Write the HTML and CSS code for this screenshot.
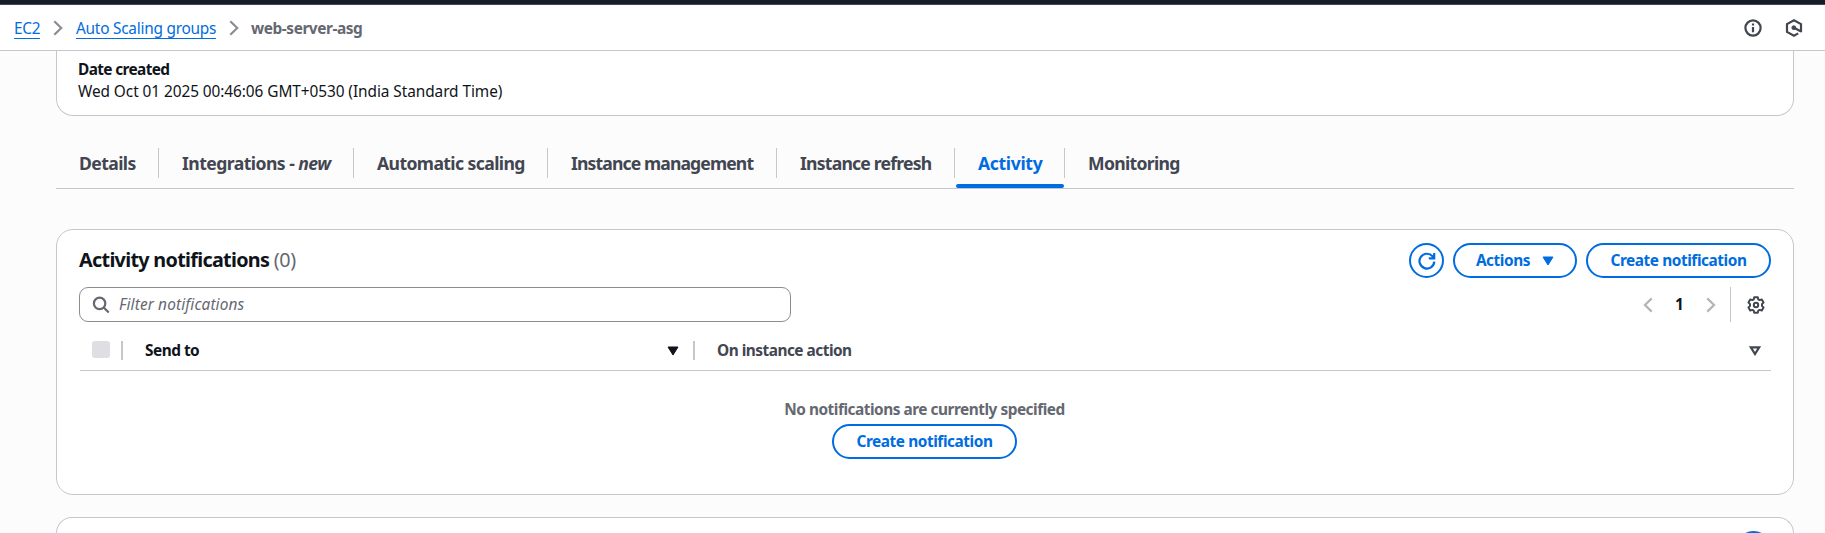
FILE: index.html
```html
<!DOCTYPE html>
<html lang="en">
<head>
<meta charset="utf-8">
<title>web-server-asg | Auto Scaling groups</title>
<link rel="stylesheet" href="styles.css">
</head>
<body>
<div class="topbar"></div>
<header class="header">
  <nav class="crumbs">
    <a class="crumb crumb-ec2">EC2</a>
    <svg class="crumb-sep" width="10" height="16" viewBox="0 0 10 16"><path d="M1.3 1.2 8.2 8l-6.9 6.8"/></svg>
    <a class="crumb crumb-asg">Auto Scaling groups</a>
    <svg class="crumb-sep" width="10" height="16" viewBox="0 0 10 16"><path d="M1.3 1.2 8.2 8l-6.9 6.8"/></svg>
    <span class="crumb-current">web-server-asg</span>
  </nav>
  <div class="tools">
    <svg width="18" height="18" viewBox="0 0 18 18"><circle cx="9" cy="9" r="7.6"/><path d="M9 8v5.2M9 4.6v2"/></svg>
    <svg width="18" height="18" viewBox="0 0 18 18"><path d="M16 13.2V5.1L9 1.3 2 5.1v7.8l7 3.800 4.200-2.300M9 8.800l7 3.600"/><circle class="solid" cx="8.800" cy="8.700" r="1.900"/></svg>
  </div>
</header>
<main class="main">
  <section class="summary">
    <div class="label">Date created</div>
    <div class="value">Wed Oct 01 2025 00:46:06 GMT+0530 (India Standard Time)</div>
  </section>
  <nav class="tabs">
    <a class="tab t1"><span>Details</span></a>
    <a class="tab t2"><span>Integrations - <i>new</i></span></a>
    <a class="tab t3"><span>Automatic scaling</span></a>
    <a class="tab t4"><span>Instance management</span></a>
    <a class="tab t5"><span>Instance refresh</span></a>
    <a class="tab t6 active"><span>Activity</span></a>
    <a class="tab t7"><span>Monitoring</span></a>
  </nav>
  <section class="panel">
    <div class="panel-head">
      <h2><span class="title">Activity notifications</span> <span class="count">(0)</span></h2>
      <div class="actions">
        <button class="btn round"><svg width="18" height="18" viewBox="0 0 18 18"><path d="M16.3 9.6A7.4 7.4 0 1 1 14.6 4.4L16 6M16.2 1v5.3h-5.4"/></svg></button>
        <button class="btn menu"><span>Actions</span><svg width="12" height="10" viewBox="0 0 12 10"><path class="solid" d="M1 1h10L6 9z"/></svg></button>
        <button class="btn create"><span>Create notification</span></button>
      </div>
    </div>
    <div class="filter-row">
      <div class="search">
        <svg width="18" height="18" viewBox="0 0 18 18"><circle cx="7.6" cy="7.4" r="5.7"/><path d="m11.7 11.5 5 5"/></svg>
        <span>Filter notifications</span>
      </div>
      <div class="pager">
        <svg width="10" height="16" viewBox="0 0 10 16"><path d="M8.7 1.4 2 8l6.7 6.6"/></svg>
        <b>1</b>
        <svg width="10" height="16" viewBox="0 0 10 16"><path d="M1.3 1.4 8 8l-6.7 6.6"/></svg>
        <div class="prefs">
          <svg class="gear" width="18" height="18" viewBox="0 0 18 18"><path d="M7.2 1.300h3.600l.5 2.100 1.300.7 2.200-.6 1.700 3-1.500 1.600v1.800l1.500 1.600-1.700 3-2.200-.6-1.300.7-.5 2.100H7.200l-.5-2.100-1.300-.7-2.200.6-1.700-3L3 9.900V8.100L1.500 6.500l1.700-3 2.200.6 1.300-.7z"/><circle cx="9" cy="9" r="2.200"/></svg>
        </div>
      </div>
    </div>
    <div class="thead">
      <span class="check"></span>
      <span class="rule"></span>
      <div class="col col-send"><span>Send to</span><svg width="12" height="10" viewBox="0 0 12 10"><path class="solid" d="M1 1h10L6 9z"/></svg></div>
      <span class="rule"></span>
      <div class="col col-action"><span>On instance action</span><svg width="12" height="10" viewBox="0 0 12 10"><path d="M1.800 1.300h8.400L6 8z"/></svg></div>
    </div>
    <div class="empty">
      <div class="empty-text">No notifications are currently specified</div>
      <button class="btn create"><span>Create notification</span></button>
    </div>
  </section>
  <section class="panel next">
    <div class="panel-head"><h2></h2><button class="btn round"></button></div>
  </section>
</main>
</body>
</html>
```
FILE: styles.css
```css
* { box-sizing: border-box; }
body {
  margin: 0;
  height: 533px;
  overflow: hidden;
  background: #fcfcfd;
  color: #0f141a;
  font-family: "Noto Sans", sans-serif;
  font-size: 15.4px;
  line-height: 22px;
}
svg { display: block; flex: none; fill: none; stroke: currentColor; stroke-width: 2.2; }
.solid { fill: currentColor; stroke-width: 1; stroke-linejoin: round; }
.gear { stroke-linejoin: round; stroke-width: 2; }
.topbar { height: 5px; background: #161d26; border-bottom: 1px solid #424650; }
.header {
  height: 46px;
  display: flex;
  align-items: center;
  justify-content: space-between;
  padding: 0 22px 0 14px;
  background: #fff;
  border-bottom: 1px solid #c6c6cd;
}
.crumbs { display: flex; align-items: center; white-space: nowrap; }
.crumb { color: #006ce0; border-bottom: 1px solid #006ce0; height: 22px; line-height: 24px; margin-top: 1px; letter-spacing: -0.24px; }
.crumb-ec2 { width: 26px; }
.crumb-asg { width: 140px; }
.crumb-sep { color: #8c8c94; margin: 0 13px; }
.crumb-sep + .crumb-current { margin-left: -1px; }
.crumb-current { font-weight: 700; color: #656871; margin-top: 2px; letter-spacing: -0.42px; }
.tools { display: flex; gap: 23px; color: #424650; }
.main { padding: 0 31px 0 56px; }
.summary {
  height: 65px;
  padding: 8px 21px 0;
  background: #fff;
  border: 1px solid #c6c6cd;
  border-top: 0;
  border-radius: 0 0 17px 17px;
}
.label { font-weight: 700; letter-spacing: -0.62px; }
.value { white-space: nowrap; letter-spacing: -0.07px; }
.tabs { display: flex; height: 73px; padding-top: 32px; border-bottom: 1px solid #c6c6cd; }
.tab {
  position: relative;
  height: 30px;
  padding-left: 23px;
  border-right: 1px solid #c6c6cd;
  color: #424650;
  font-size: 17.6px;
  font-weight: 700;
  line-height: 30px;
  white-space: nowrap;
}
.t1 { width: 103px; letter-spacing: -0.6px; }
.t2 { width: 195px; letter-spacing: -0.55px; }
.t3 { width: 194px; letter-spacing: -0.6px; }
.t4 { width: 229px; letter-spacing: -0.88px; }
.t5 { width: 178px; letter-spacing: -0.78px; }
.t6 { width: 110px; letter-spacing: -0.35px; }
.t7 { border-right: 0; letter-spacing: -0.68px; }
.active { color: #006ce0; }
.active::after {
  content: "";
  position: absolute;
  left: 1px;
  right: 0;
  top: 36px;
  height: 4px;
  border-radius: 2px;
  background: #006ce0;
}
.panel {
  height: 266px;
  margin-top: 40px;
  padding: 13px 22px 0;
  background: #fff;
  border: 1px solid #c6c6cd;
  border-radius: 17px;
}
.next {
  height: 16px;
  margin-top: 22px;
  border-bottom: 0;
  border-radius: 17px 17px 0 0;
  overflow: hidden;
}
.panel-head { display: flex; justify-content: space-between; height: 44px; }
h2 { margin: -1px 0 0; font-size: 19.8px; line-height: 35px; white-space: nowrap; font-weight: 700; letter-spacing: -0.7px; }
.count { font-weight: 400; color: #656871; letter-spacing: -0.4px; }
.actions { display: flex; gap: 9px; }
.btn {
  height: 35px;
  display: flex;
  align-items: center;
  justify-content: center;
  padding: 0;
  border: 2px solid #006ce0;
  border-radius: 18px;
  background: #fff;
  color: #006ce0;
  font: 700 15.4px/22px "Noto Sans", sans-serif;
  letter-spacing: -0.43px;
  white-space: nowrap;
}
.round { width: 35px; }
.menu { width: 124px; gap: 12px; }
.create { width: 185px; }
.filter-row { display: flex; justify-content: space-between; height: 36px; }
.search {
  width: 712px;
  height: 35px;
  display: flex;
  align-items: center;
  gap: 9px;
  padding-left: 12px;
  border: 1px solid #8c8c94;
  border-radius: 9px;
  color: #656871;
  font-style: italic;
  letter-spacing: 0.13px;
}
.pager { display: flex; align-items: center; height: 35px; color: #b4b4bb; }
.pager b { width: 53px; text-align: center; color: #0f141a; font-weight: 700; }
.prefs { display: flex; align-items: center; height: 35px; margin-left: 14px; padding: 0 6px 0 16px; border-left: 1px solid #c6c6cd; color: #424650; }
.thead { display: flex; align-items: center; height: 48px; margin-left: 1px; padding: 0 10px 0 12px; border-bottom: 1px solid #c6c6cd; }
.check { width: 18px; height: 17px; border-radius: 3px; background: #dedee3; margin-top: 5px; }
.rule { width: 2px; height: 19px; background: #c6c6cd; margin: 7px 0 0 11px; }
.col { display: flex; align-items: center; justify-content: space-between; padding-left: 22px; padding-top: 8px; font-weight: 700; letter-spacing: -0.5px; }
.col-send { width: 556px; }
.col-send + .rule { margin-left: 14px; }
.col-action { flex: 1; color: #424650; }
.empty { display: flex; flex-direction: column; align-items: center; padding-top: 28px; gap: 3px; margin-right: 1px; }
.empty-text { font-weight: 700; color: #656871; letter-spacing: -0.48px; }
```
